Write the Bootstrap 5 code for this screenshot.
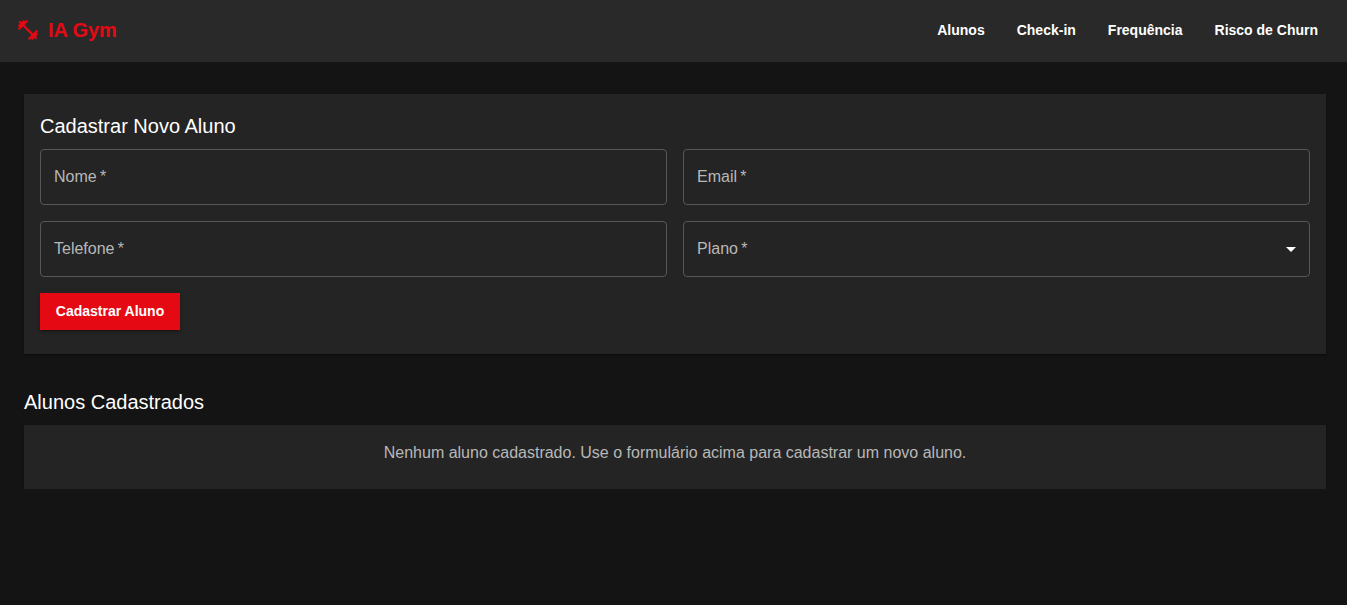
<!DOCTYPE html>
<html lang="pt-BR" data-bs-theme="dark">
<head>
<meta charset="utf-8">
<meta name="viewport" content="width=device-width, initial-scale=1">
<title>IA Gym</title>
<link href="https://cdn.jsdelivr.net/npm/bootstrap@5.3.0/dist/css/bootstrap.min.css" rel="stylesheet">
<style>
body{background:#141414;color:#fff;font-family:"Liberation Sans",Arial,sans-serif;font-size:16px;line-height:24px}
.topbar{height:62px;background:#292929;padding:0 21px 2px 16px}
.brand{color:#e50914;font-size:20px;line-height:32px;font-weight:700;letter-spacing:-.1px}
.brand:hover{color:#e50914}
.topbar .nav-link{color:#fff;font-size:14px;line-height:24.5px;font-weight:700;padding:6px 8px}
.page{padding:32px 21px 0 24px}
.panel{background:#242424;box-shadow:0 2px 1px -1px rgba(0,0,0,.2),0 1px 1px rgba(0,0,0,.14),0 1px 3px rgba(0,0,0,.12)}
.section-title{font-size:20px;line-height:32px;font-weight:400;margin-bottom:7px}
.field{height:56px;border:1px solid #575757;border-radius:4px;color:#b8b8b8;padding:0 6px 0 13px}
.btn-enroll{background:#e50914;color:#fff;border:0;border-radius:0;font-size:14px;line-height:25px;font-weight:700;padding:6px 0;width:140px;white-space:nowrap;box-shadow:0 3px 1px -2px rgba(0,0,0,.2),0 2px 2px rgba(0,0,0,.14),0 1px 5px rgba(0,0,0,.12)}
.btn-enroll:hover{background:#b20710;color:#fff}
.empty{height:64px;color:#b8b8b8}
</style>
</head>
<body>
<header class="topbar d-flex align-items-center justify-content-between">
  <a class="brand d-flex align-items-center gap-2 text-decoration-none" href="#">
    <svg width="24" height="24" viewBox="0 0 24 24" fill="currentColor" stroke="currentColor" stroke-width=".35" aria-hidden="true"><path d="M20.57 14.86 22 13.43 20.57 12 17 15.57 8.43 7 12 3.43 10.57 2 9.14 3.43 7.71 2 5.57 4.14 4.14 2.71 2.71 4.14l1.43 1.43L2 7.71l1.43 1.43L2 10.57 3.43 12 7 8.43 15.57 17 12 20.57 13.43 22l1.43-1.43L16.29 22l2.14-2.14 1.43 1.43 1.43-1.43-1.43-1.43L22 16.29z"/></svg>
    <span>IA Gym</span>
  </a>
  <nav class="nav gap-3">
    <a class="nav-link" href="#">Alunos</a>
    <a class="nav-link" href="#">Check-in</a>
    <a class="nav-link" href="#">Frequência</a>
    <a class="nav-link" href="#">Risco de Churn</a>
  </nav>
</header>
<main class="page">
  <section class="panel p-3 pb-4">
    <h2 class="section-title">Cadastrar Novo Aluno</h2>
    <form>
      <div class="row g-3">
        <div class="col-6"><label class="field d-flex align-items-center">Nome&thinsp;*</label></div>
        <div class="col-6"><label class="field d-flex align-items-center">Email&thinsp;*</label></div>
        <div class="col-6"><label class="field d-flex align-items-center">Telefone&thinsp;*</label></div>
        <div class="col-6">
          <label class="field d-flex align-items-center justify-content-between">Plano&thinsp;*
            <svg width="24" height="24" viewBox="0 0 24 24" fill="#fff" aria-hidden="true"><path d="m7 10 5 5 5-5z"/></svg>
          </label>
        </div>
      </div>
      <button type="button" class="btn btn-enroll mt-3 d-block">Cadastrar Aluno</button>
    </form>
  </section>
  <h2 class="section-title mt-4 pt-2">Alunos Cadastrados</h2>
  <section class="panel empty text-center pt-3">Nenhum aluno cadastrado. Use o formulário acima para cadastrar um novo aluno.</section>
</main>
<script src="https://cdn.jsdelivr.net/npm/bootstrap@5.3.0/dist/js/bootstrap.bundle.min.js"></script>
</body>
</html>
